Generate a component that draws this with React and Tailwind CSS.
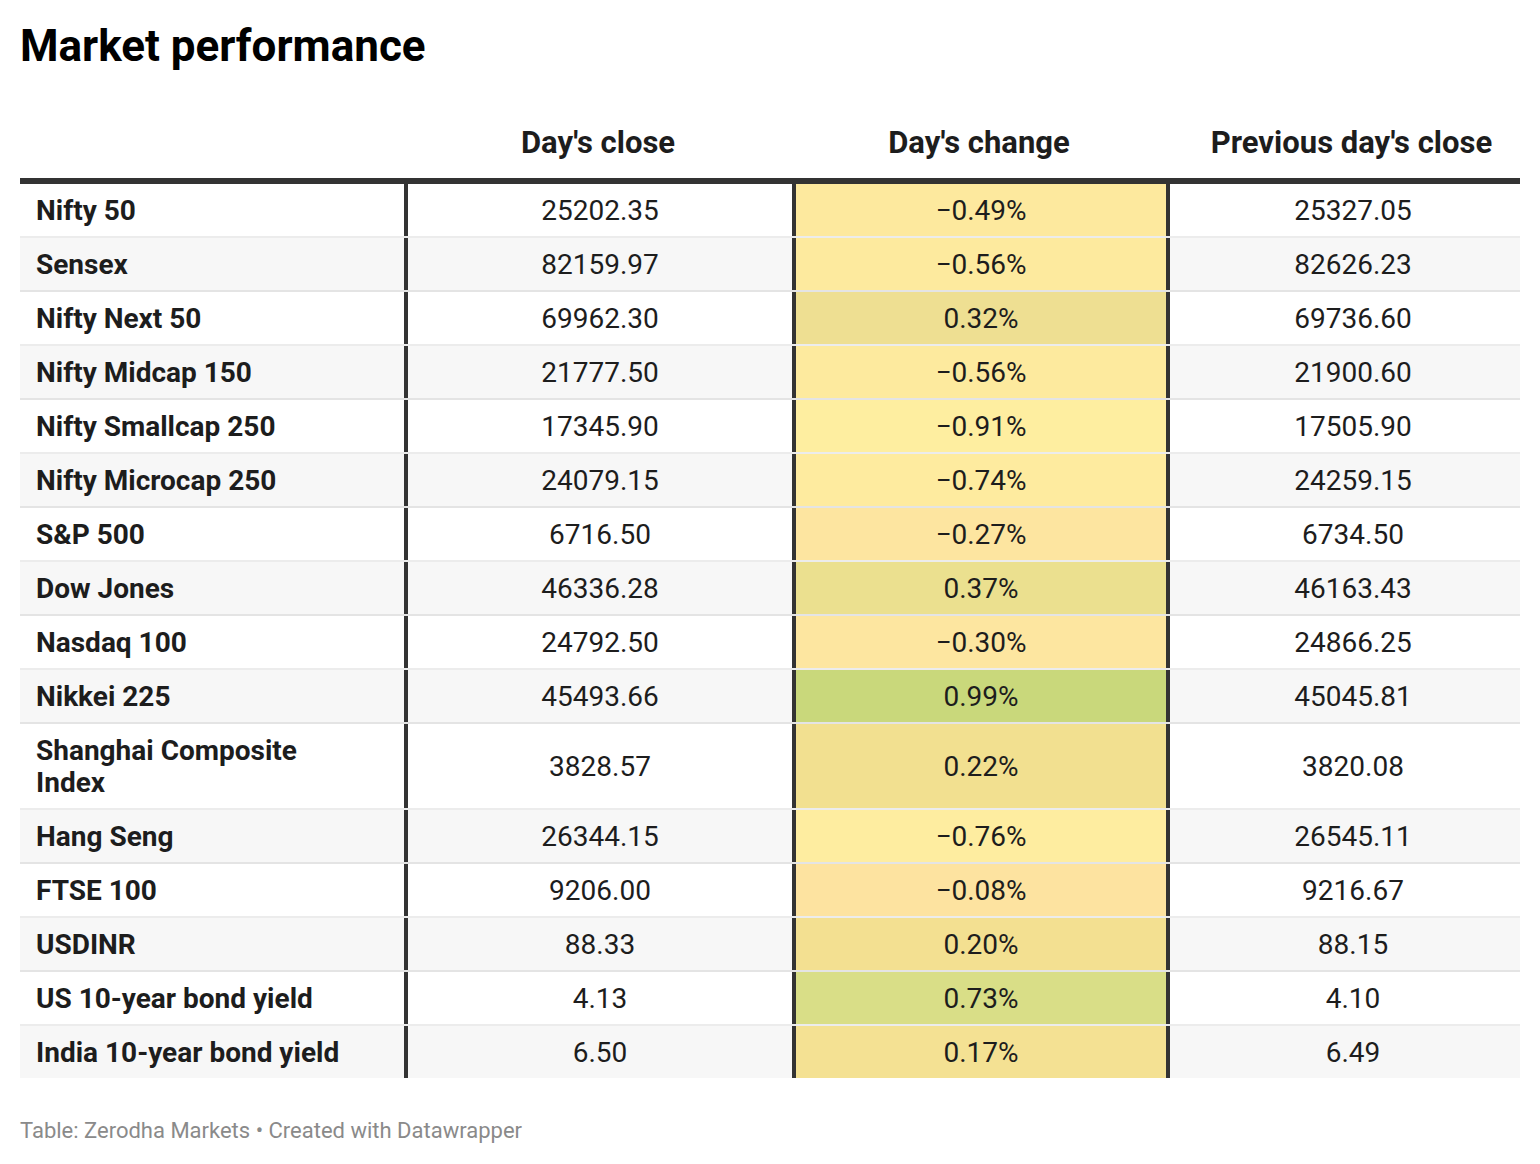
import React from 'react';

const rows = [
  { name: 'Nifty 50', close: '25202.35', change: '−0.49%', prev: '25327.05', color: 'bg-[#fde99e]' },
  { name: 'Sensex', close: '82159.97', change: '−0.56%', prev: '82626.23', color: 'bg-[#fdea9e]' },
  { name: 'Nifty Next 50', close: '69962.30', change: '0.32%', prev: '69736.60', color: 'bg-[#eedf92]' },
  { name: 'Nifty Midcap 150', close: '21777.50', change: '−0.56%', prev: '21900.60', color: 'bg-[#fdea9e]' },
  { name: 'Nifty Smallcap 250', close: '17345.90', change: '−0.91%', prev: '17505.90', color: 'bg-[#feeea0]' },
  { name: 'Nifty Microcap 250', close: '24079.15', change: '−0.74%', prev: '24259.15', color: 'bg-[#feeb9f]' },
  { name: 'S&P 500', close: '6716.50', change: '−0.27%', prev: '6734.50', color: 'bg-[#fde5a0]' },
  { name: 'Dow Jones', close: '46336.28', change: '0.37%', prev: '46163.43', color: 'bg-[#ebe08f]' },
  { name: 'Nasdaq 100', close: '24792.50', change: '−0.30%', prev: '24866.25', color: 'bg-[#fde6a0]' },
  { name: 'Nikkei 225', close: '45493.66', change: '0.99%', prev: '45045.81', color: 'bg-[#c9d87b]' },
  { name: 'Shanghai Composite Index', close: '3828.57', change: '0.22%', prev: '3820.08', color: 'bg-[#f2e090]' },
  { name: 'Hang Seng', close: '26344.15', change: '−0.76%', prev: '26545.11', color: 'bg-[#feeda0]' },
  { name: 'FTSE 100', close: '9206.00', change: '−0.08%', prev: '9216.67', color: 'bg-[#fde3a0]' },
  { name: 'USDINR', close: '88.33', change: '0.20%', prev: '88.15', color: 'bg-[#f3e091]' },
  { name: 'US 10-year bond yield', close: '4.13', change: '0.73%', prev: '4.10', color: 'bg-[#d9de87]' },
  { name: 'India 10-year bond yield', close: '6.50', change: '0.17%', prev: '6.49', color: 'bg-[#f4e193]' },
];

export default function App() {
  return (
    <div className="min-h-screen bg-white px-[20px] pt-[20px] text-[#1d1d1d]" style={{ fontFamily: 'Roboto, "Liberation Sans", sans-serif' }}>
      <h1 className="text-[44px] leading-[52px] font-bold text-black">Market performance</h1>

      <div className="mt-[40px] w-[1500px]">
        {/* header */}
        <div className="flex border-b-[6px] border-[#333333] text-[31px] leading-[34px] font-bold">
          <div className="w-[388px] px-[16px] pt-[14px] pb-[18px]"></div>
          <div className="w-[388px] pl-[16px] pr-[24px] pt-[14px] pb-[18px] text-center">Day's close</div>
          <div className="w-[374px] pl-[16px] pr-[24px] pt-[14px] pb-[18px] text-center">Day's change</div>
          <div className="flex-1 pl-[16px] pr-[3px] pt-[14px] pb-[18px] text-center">Previous day's close</div>
        </div>

        {rows.map((r, i) => (
          <div
            key={r.name}
            className={`flex text-[28px] leading-[32px] ${i % 2 === 1 ? 'bg-[#f7f7f7]' : 'bg-white'} ${i < rows.length - 1 ? 'border-b-2 border-black/[0.075]' : ''}`}
          >
            <div className="w-[388px] border-r-4 border-[#333333] pl-[16px] pr-[40px] pt-[11px] pb-[9px] font-bold flex items-center">
              {r.name}
            </div>
            <div className="w-[388px] border-r-4 border-[#333333] px-[16px] pt-[11px] pb-[9px] text-center flex items-center justify-center">
              {r.close}
            </div>
            <div className={`w-[374px] border-r-4 border-[#333333] px-[16px] pt-[11px] pb-[9px] text-center flex items-center justify-center ${r.color}`}>
              {r.change}
            </div>
            <div className="flex-1 pl-[16px] pt-[11px] pb-[9px] text-center flex items-center justify-center">
              {r.prev}
            </div>
          </div>
        ))}
      </div>

      <p className="mt-[40px] text-[22px] leading-[26px] text-[#8a8a8a]">
        Table: Zerodha Markets • Created with Datawrapper
      </p>
    </div>
  );
}
